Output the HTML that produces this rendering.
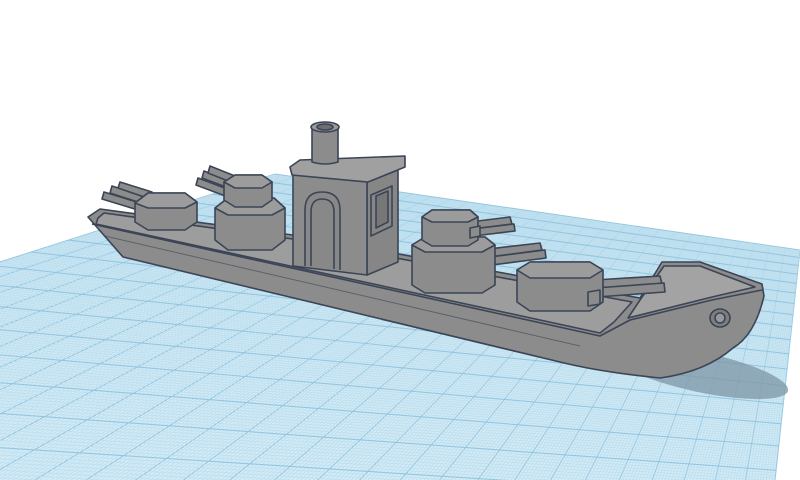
<!DOCTYPE html>
<html><head><meta charset="utf-8"><style>
html,body{margin:0;padding:0;background:#fff;width:800px;height:480px;overflow:hidden}
svg{display:block;overflow:hidden}
</style></head><body>
<svg id="s" width="800" height="480" viewBox="0 0 800 480" xmlns="http://www.w3.org/2000/svg">
<defs><clipPath id="cp"><rect width="800" height="480"/></clipPath></defs>
<g clip-path="url(#cp)">
<rect width="800" height="480" fill="#fff"/>
<polygon points="275,174 800,250 751,700 -1369,700" fill="#d3ebf6"/>
<g id="grid"></g>
<ellipse cx="700" cy="372" rx="90" ry="20" fill="#7d95a6" opacity="0.75" transform="rotate(12 700 372)"/>
<g stroke="#3b4556" stroke-width="1.6" stroke-linejoin="round" fill="#8c8c8c">
<path d="M88,217 L100,209 L300,236 L640,298 L662,262 L700,262 L762,284 L764,296 Q755,335 733,348 Q705,372 660,378 Q600,372 560,362 L123,257 Z"/>
<path d="M98,218 L104,213 L300,240 L632,302 L614,322 L600,333 L96,224 Z" fill="#9d9d9d"/>
<path d="M640,300 L664,266 L700,266 L755,287 L712,297 L628,318 Z" fill="#a3a3a3"/>
<path d="M92,224 L600,336 L630,320 L712,300 L762,290" fill="none"/>
<path d="M105,236 L580,346" fill="none" stroke-width="1" opacity="0.6"/>
<ellipse cx="720" cy="318" rx="10" ry="9" fill="#7e7e7e"/>
<ellipse cx="720" cy="318" rx="5" ry="5" fill="#999"/>
<path d="M104,192 L140,203 L138,210 L102,199 Z"/>
<path d="M112,186 L146,197 L144,204 L110,193 Z"/>
<path d="M120,182 L152,192 L150,199 L118,188 Z"/>
<path d="M135,203 L148,193 L185,193 L197,202 L197,222 L185,230 L148,230 L135,222 Z"/>
<path d="M135,203 L148,193 L185,193 L197,202 L185,208 L148,208 Z" fill="#9c9c9c"/>
<path d="M198,178 L230,190 L228,197 L196,185 Z"/>
<path d="M204,171 L236,183 L234,190 L202,178 Z"/>
<path d="M210,166 L240,178 L238,185 L208,173 Z"/>
<path d="M215,208 L228,198 L274,198 L285,208 L285,240 L272,250 L228,250 L215,240 Z"/>
<path d="M215,208 L228,198 L274,198 L285,208 L272,215 L228,215 Z" fill="#9c9c9c"/>
<path d="M224,182 L235,175 L262,175 L272,182 L272,200 L262,207 L235,207 L224,200 Z"/>
<path d="M224,182 L235,175 L262,175 L272,182 L262,188 L235,188 Z" fill="#9c9c9c"/>
<path d="M367,182 L398,170 L398,262 L367,275 Z" fill="#868686"/>
<path d="M293,175 L367,182 L367,275 L293,266 Z"/>
<path d="M290,167 L300,160 L405,156 L405,167 L368,182 L292,175 Z" fill="#a0a0a0"/>
<path d="M305,266 L305,210 Q305,192 322,192 Q340,192 340,210 L340,270" fill="#888"/>
<path d="M311,266 L311,212 Q311,199 322,199 Q334,199 334,212 L334,269" fill="none"/>
<path d="M371,195 L392,186 L392,226 L371,236 Z" fill="#868686"/>
<path d="M376,196 L388,191 L388,222 L376,228 Z" fill="#777"/>
<path d="M312,128 L312,162 Q325,166 338,162 L338,128 Z"/>
<ellipse cx="325" cy="127" rx="14" ry="5" fill="#9a9a9a"/>
<ellipse cx="325" cy="127" rx="8" ry="3" fill="#6f6f6f"/>
<path d="M480,250 L540,243 L542,250 L482,258 Z"/>
<path d="M482,258 L545,250 L546,258 L484,266 Z"/>
<path d="M470,222 L510,217 L512,224 L472,229 Z"/>
<path d="M472,229 L514,224 L515,231 L474,236 Z"/>
<path d="M412,245 L425,237 L485,237 L495,245 L495,285 L482,293 L425,293 L412,285 Z"/>
<path d="M412,245 L425,237 L485,237 L495,245 L482,252 L425,252 Z" fill="#9c9c9c"/>
<path d="M422,217 L432,210 L470,210 L478,217 L478,240 L468,246 L432,246 L422,240 Z"/>
<path d="M422,217 L432,210 L470,210 L478,217 L468,222 L432,222 Z" fill="#9c9c9c"/>
<path d="M470,228 L480,226 L480,236 L470,238 Z"/>
<path d="M595,280 L660,276 L662,284 L597,288 Z"/>
<path d="M595,288 L664,283 L665,292 L597,297 Z"/>
<path d="M517,270 L530,262 L590,262 L603,270 L603,302 L590,311 L530,311 L517,302 Z"/>
<path d="M517,270 L530,262 L590,262 L603,270 L590,278 L530,278 Z" fill="#9c9c9c"/>
<path d="M588,292 L600,290 L600,304 L588,306 Z"/>
</g>
</g>
</svg>
<script>
(function(){
var P=[[275,174],[800,250],[751,700],[-1369,700]];
function H(q){var x0=q[0][0],y0=q[0][1],x1=q[1][0],y1=q[1][1],x2=q[2][0],y2=q[2][1],x3=q[3][0],y3=q[3][1];
var dx1=x1-x2,dx2=x3-x2,dy1=y1-y2,dy2=y3-y2,sx=x0-x1+x2-x3,sy=y0-y1+y2-y3;
var d=dx1*dy2-dx2*dy1,g=(sx*dy2-dx2*sy)/d,h=(dx1*sy-sx*dy1)/d;
var a=x1-x0+g*x1,b=x3-x0+h*x3,c=x0,dd=y1-y0+g*y1,e=y3-y0+h*y3,f=y0;
return function(u,v){var w=g*u+h*v+1;return [(a*u+b*v+c)/w,(dd*u+e*v+f)/w];};}
var m=H(P),g=document.getElementById('grid'),s='';
var NU=300,NV=220;
for(var i=0;i<=NU;i++){var u=i/NU,A=m(u,0),B=m(u,1),maj=i%10==0;
s+='<line x1="'+A[0].toFixed(1)+'" y1="'+A[1].toFixed(1)+'" x2="'+B[0].toFixed(1)+'" y2="'+B[1].toFixed(1)+'" stroke="'+(maj?'#93c6e0':'#bcdeee')+'" stroke-width="'+(maj?1.1:0.7)+'"/>';}
for(var j=0;j<=NV;j++){var v=j/NV,A=m(0,v),B=m(1,v),maj=j%10==0;
s+='<line x1="'+A[0].toFixed(1)+'" y1="'+A[1].toFixed(1)+'" x2="'+B[0].toFixed(1)+'" y2="'+B[1].toFixed(1)+'" stroke="'+(maj?'#93c6e0':'#bcdeee')+'" stroke-width="'+(maj?1.1:0.7)+'"/>';}
g.innerHTML=s;
})();
</script>
</body></html>
